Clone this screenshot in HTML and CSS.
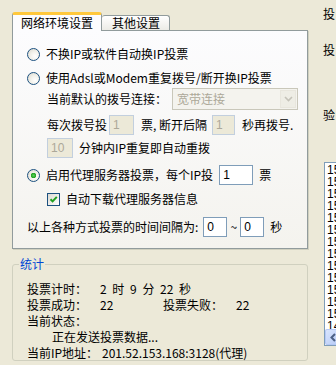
FILE: index.html
```html
<!DOCTYPE html>
<html>
<head>
    <meta charset="utf-8">
    <title>投票设置</title>
    <link rel="stylesheet" href="styles.css">
</head>
<body>
    <div class="window">
        <div class="main">
            <div class="tabs">
                <div class="tab tab-active">网络环境设置</div>
                <div class="tab">其他设置</div>
            </div>
            <div class="panel">
                <div class="row row-1">
                    <span class="radio"></span>
                    <span class="label">不换IP或软件自动换IP投票</span>
                </div>
                <div class="row row-2">
                    <span class="radio"></span>
                    <span class="label">使用Adsl或Modem重复拨号/断开换IP投票</span>
                </div>
                <div class="row row-3 indent">
                    <span>当前默认的拨号连接：</span>
                    <div class="select">
                        <span class="select-text">宽带连接</span>
                        <span class="select-btn">
                            <svg width="9" height="6" viewBox="0 0 9 6"><path d="M1 1 L4.5 4.5 L8 1" fill="none" stroke="#c4c2b8" stroke-width="1.6"/></svg>
                        </span>
                    </div>
                </div>
                <div class="row row-4 indent">
                    <span>每次拨号投</span>
                    <span class="input input-off w-25">1</span>
                    <span class="after">票, 断开后隔</span>
                    <span class="input input-off w-23">1</span>
                    <span class="after">秒再拨号.</span>
                </div>
                <div class="row row-5 indent">
                    <span class="input input-off w-26">10</span>
                    <span class="after-wide">分钟内IP重复即自动重拨</span>
                </div>
                <div class="row row-6">
                    <span class="radio radio-on"></span>
                    <span class="label">启用代理服务器投票，每个IP投</span>
                    <span class="input w-34">1</span>
                    <span class="after-wide">票</span>
                </div>
                <div class="row row-7 indent">
                    <span class="check">
                        <svg width="11" height="11" viewBox="0 0 11 11"><path d="M2.5 5.2 L4.6 7.4 L8.8 2.8" fill="none" stroke="#21a121" stroke-width="2"/></svg>
                    </span>
                    <span class="label">自动下载代理服务器信息</span>
                </div>
                <div class="row row-8">
                    <span>以上各种方式投票的时间间隔为:</span>
                    <span class="input w-24 first">0</span>
                    <span class="tilde">~</span>
                    <span class="input w-24">0</span>
                    <span class="after-wide">秒</span>
                </div>
            </div>

            <div class="stats">
                <span class="legend">统计</span>
                <div class="stat-row">
                    <span class="stat-key">投票计时：</span>
                    <span class="stat-time">2 时 9 分 22 秒</span>
                </div>
                <div class="stat-row">
                    <span class="stat-key">投票成功：</span>
                    <span class="stat-val">22</span>
                    <span class="stat-key">投票失败：</span>
                    <span>22</span>
                </div>
                <div class="stat-row">
                    <span>当前状态：</span>
                </div>
                <div class="stat-row stat-indent">
                    <span>正在发送投票数据...</span>
                </div>
                <div class="stat-row">
                    <span class="stat-key">当前IP地址：</span>
                    <span class="stat-ip">201.52.153.168:3128(代理)</span>
                </div>
            </div>
        </div>

        <div class="side">
            <div class="side-label first-label">投</div>
            <div class="side-label second-label">投</div>
            <div class="side-label third-label">验</div>
            <div class="listbox">
                <div class="list-lines">
                    <div>159.148.53.12:8080</div>
                    <div>151.9.233.6:80</div>
                    <div>152.101.46.2:3128</div>
                    <div>150.187.2.61:8080</div>
                    <div>155.69.203.7:80</div>
                    <div>159.226.11.3:3128</div>
                    <div>158.129.4.90:8080</div>
                    <div>150.165.75.1:80</div>
                    <div>151.101.3.14:3128</div>
                    <div>156.17.6.200:8080</div>
                    <div>159.90.7.34:80</div>
                    <div>152.3.41.8:3128</div>
                    <div>157.91.2.77:8080</div>
                    <div>148.233.159.5:80</div>
                </div>
                <div class="hscroll">
                    <span class="scroll-btn">
                        <svg width="8" height="9" viewBox="0 0 8 9"><path d="M6 1 L2.5 4.5 L6 8" fill="none" stroke="#4d6185" stroke-width="2"/></svg>
                    </span>
                </div>
            </div>
        </div>
    </div>
</body>
</html>
```

FILE: styles.css
```css
html, body {
    margin: 0;
    height: 100%;
    overflow: hidden;
}
body {
    background-color: #ece9d8;
    color: #000;
    font-family: "Noto Sans CJK SC", "Liberation Sans", sans-serif;
    font-size: 12px;
    line-height: 16px;
}
.window {
    display: flex;
    width: 336px;
    height: 365px;
}
.main {
    width: 296px;
    margin-left: 12px;
    flex: none;
}

/* tabs */
.tabs {
    display: flex;
    align-items: flex-end;
    height: 18px;
    margin-top: 12px;
    position: relative;
    z-index: 1;
}
.tab {
    box-sizing: border-box;
    height: 15px;
    padding: 0 9px 0 10px;
    border: 1px solid #919b9c;
    border-bottom: none;
    border-left: none;
    border-radius: 3px 3px 0 0;
    background: linear-gradient(#ffffff, #ecebe6);
    line-height: 14px;
    font-size: 12px;
}
.tab-active {
    height: 19px;
    margin-bottom: -1px;
    padding: 0 8px;
    border-left: 1px solid #919b9c;
    border-top: 3px solid #ffc83c;
    background: #fcfcfe;
    line-height: 15px;
}

/* tab body */
.panel {
    box-sizing: border-box;
    height: 219px;
    border: 1px solid #919b9c;
    background: linear-gradient(#fcfcfe, #f4f3ee);
    box-shadow: 1px 1px 0 #d0d0bf;
    padding: 13px 0 0 14px;
}
.row {
    display: flex;
    align-items: center;
    height: 20px;
    white-space: nowrap;
}
.row-2 { margin-top: 4px; }
.row-3 { height: 22px; }
.row-4 { margin-top: 5px; }
.row-5 { margin-top: 3px; }
.row-6 { margin-top: 7px; }
.row-7 { height: 18px; margin-top: 5px; }
.row-8 { margin-top: 9px; }
.indent { padding-left: 20px; }

.radio {
    box-sizing: border-box;
    width: 13px;
    height: 13px;
    border: 1px solid #1c5180;
    border-radius: 50%;
    background: radial-gradient(circle at 65% 65%, #ffffff 0, #f2f1ea 45%, #d8d6cc 100%);
    margin-right: 6px;
    flex: none;
}
.radio-on {
    background:
        radial-gradient(circle at 50% 50%, #5bd05b 0, #21a121 2.5px, transparent 3px),
        radial-gradient(circle at 65% 65%, #ffffff 0, #f2f1ea 45%, #d8d6cc 100%);
}
.check {
    box-sizing: border-box;
    display: flex;
    align-items: center;
    justify-content: center;
    width: 13px;
    height: 13px;
    border: 1px solid #1c5180;
    background: linear-gradient(135deg, #dcdad2, #ffffff);
    margin-right: 6px;
}

.select {
    box-sizing: border-box;
    display: flex;
    align-items: center;
    width: 126px;
    height: 22px;
    margin-left: 5px;
    border: 1px solid #c9c7ba;
    background: #f4f3ee;
    padding: 1px;
}
.select-text {
    flex: 1;
    padding-left: 3px;
    color: #aca899;
}
.select-btn {
    box-sizing: border-box;
    display: flex;
    align-items: center;
    justify-content: center;
    width: 16px;
    height: 18px;
    border: 1px solid #e8e6dd;
    background: #eeede5;
}

.input {
    box-sizing: border-box;
    height: 20px;
    border: 1px solid #7f9db9;
    background: #fff;
    padding-left: 3px;
    line-height: 18px;
    font-family: "Liberation Sans", sans-serif;
}
.input-off {
    border-color: #c2cfde;
    background: #ece9d8;
    color: #aca899;
}
.w-23 { width: 23px; }
.w-24 { width: 24px; }
.w-25 { width: 25px; margin-left: 2px; }
.w-26 { width: 26px; }
.w-34 { width: 34px; margin-left: 6px; }
.first { margin-left: 5px; }
.after { margin: 0 5px 0 7px; }
.after-wide { margin-left: 6px; }
.tilde { width: 13px; text-align: center; }

/* stats group */
.stats {
    box-sizing: border-box;
    height: 97px;
    margin-top: 15px;
    border: 1px solid #d0d0bf;
    border-radius: 3px;
    padding: 0 0 0 14px;
}
.legend {
    display: inline-block;
    margin: -9px 0 3px -8px;
    padding: 0 1px;
    background: #ece9d8;
    color: #0046d5;
    vertical-align: top;
}
.stat-row {
    display: flex;
    height: 16px;
    white-space: nowrap;
}
.stat-key { width: 73px; flex: none; }
.stat-val { width: 63px; flex: none; }
.stat-time { word-spacing: 3px; }
.stat-indent { padding-left: 25px; }
.stat-ip { margin-left: 2px; }

/* right column */
.side {
    flex: none;
    width: 40px;
    padding-left: 15px;
}
.side-label { height: 16px; }
.first-label { margin-top: 6px; }
.second-label { margin-top: 20px; }
.third-label { margin-top: 49px; }
.listbox {
    box-sizing: border-box;
    width: 120px;
    height: 184px;
    margin-top: 39px;
    margin-left: 1px;
    border: 1px solid #7f9db9;
    background: #fff;
    display: flex;
    flex-direction: column;
}
.list-lines {
    flex: 1;
    overflow: hidden;
    padding: 1px 0 0 2px;
    font-family: "Liberation Sans", sans-serif;
    font-size: 12px;
    line-height: 12px;
}
.hscroll {
    height: 16px;
    background: #f3f1ec;
    flex: none;
}
.scroll-btn {
    box-sizing: border-box;
    display: flex;
    align-items: center;
    justify-content: center;
    width: 16px;
    height: 16px;
    border: 1px solid #b4c8f6;
    border-radius: 2px;
    background: linear-gradient(135deg, #d9e5fd, #b6caf6);
}
```
